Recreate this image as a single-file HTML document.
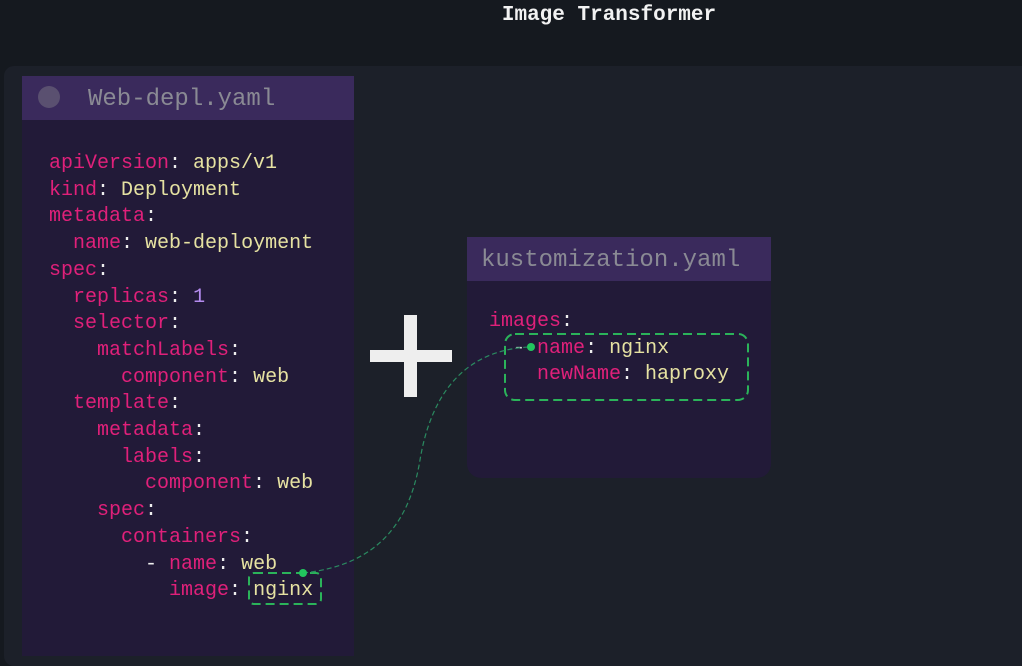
<!DOCTYPE html><html><head><style>
body{margin:0;width:1022px;height:643px;background:#15191f;overflow:hidden;position:relative;font-family:"Liberation Mono",monospace}
.title{position:absolute;top:4px;left:0;width:1218px;text-align:center;color:#f2f2f2;font-size:21px;font-weight:bold}
.panel{position:absolute;left:4px;top:66px;width:1030px;height:600px;background:#1c2029;border-radius:10px}
.card{position:absolute;background:#221a38}
.hd{background:#3a2a5c;color:#8a8a94;font-size:24px;height:44px;line-height:48px}
pre{margin:0;font-family:"Liberation Mono",monospace;font-size:20px;line-height:26.7px;color:#e6e2a2}
.k{color:#e0207a}.c{color:#eee}.n{color:#b58cf0}
</style></head><body>
<div class="title">Image Transformer</div>
<div class="panel"></div>
<div class="card" style="left:22px;top:76px;width:332px;height:580px">
<div class="hd"><span style="display:inline-block;width:22px;height:22px;border-radius:50%;background:#5a5070;vertical-align:-3px;margin:0 28px 0 16px"></span>Web-depl.yaml</div>
<pre style="padding:31px 0 0 27px"><span class="k">apiVersion</span><span class="c">:</span> apps/v1
<span class="k">kind</span><span class="c">:</span> Deployment
<span class="k">metadata</span><span class="c">:</span>
  <span class="k">name</span><span class="c">:</span> web-deployment
<span class="k">spec</span><span class="c">:</span>
  <span class="k">replicas</span><span class="c">:</span> <span class="n">1</span>
  <span class="k">selector</span><span class="c">:</span>
    <span class="k">matchLabels</span><span class="c">:</span>
      <span class="k">component</span><span class="c">:</span> web
  <span class="k">template</span><span class="c">:</span>
    <span class="k">metadata</span><span class="c">:</span>
      <span class="k">labels</span><span class="c">:</span>
        <span class="k">component</span><span class="c">:</span> web
    <span class="k">spec</span><span class="c">:</span>
      <span class="k">containers</span><span class="c">:</span>
        <span class="c">-</span> <span class="k">name</span><span class="c">:</span> web
          <span class="k">image</span><span class="c">:</span> nginx</pre>
</div>
<div class="card" style="left:467px;top:237px;width:304px;height:241px;border-radius:0 0 14px 14px">
<div class="hd" style="padding-left:14px">kustomization.yaml</div>
<pre style="padding:28px 0 0 22px"><span class="k">images</span><span class="c">:</span>
  <span class="c">-</span> <span class="k">name</span><span class="c">:</span> nginx
    <span class="k">newName</span><span class="c">:</span> haproxy</pre>
</div>
<div style="position:absolute;left:370px;top:350px;width:82px;height:12px;background:#eee"></div>
<div style="position:absolute;left:404px;top:315px;width:13px;height:82px;background:#eee"></div>
<svg style="position:absolute;left:0;top:0" width="1022" height="643">
<g fill="none" stroke="#2bb35a" stroke-width="2" stroke-dasharray="9 5">
<rect x="505" y="334" width="243" height="66" rx="10"/>
<rect x="249" y="573" width="72" height="31" rx="5"/>
</g>
<path d="M303 573 C380 565 410 520 420 460 C430 400 460 350 530 347" fill="none" stroke="#2a8a60" stroke-width="1.2" stroke-dasharray="5 3"/>
<circle cx="303" cy="573" r="4" fill="#22c55e"/><circle cx="531" cy="347" r="4" fill="#22c55e"/>
</svg>
</body></html>
